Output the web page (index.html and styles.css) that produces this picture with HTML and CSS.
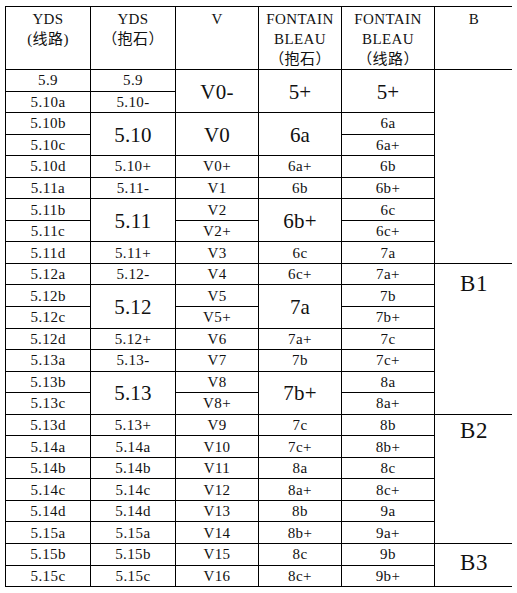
FILE: index.html
```html
<!DOCTYPE html>
<html lang="zh">
<head>
<meta charset="utf-8">
<title>攀岩难度对照表</title>
<link rel="stylesheet" href="styles.css">
</head>
<body>
<table class="grades">
  <colgroup>
    <col class="c1"><col class="c2"><col class="c3"><col class="c4"><col class="c5"><col class="c6">
  </colgroup>
  <thead>
    <tr class="head">
      <th>YDS<br>(线路)</th>
      <th>YDS<br>（抱石）</th>
      <th>V</th>
      <th>FONTAIN<br>BLEAU<br>（抱石）</th>
      <th>FONTAIN<br>BLEAU<br>（线路）</th>
      <th>B</th>
    </tr>
  </thead>
  <tbody>
    <tr><td>5.9</td><td>5.9</td><td class="big" rowspan="2">V0-</td><td class="big" rowspan="2">5+</td><td class="big" rowspan="2">5+</td><td class="band" rowspan="9"></td></tr>
    <tr><td>5.10a</td><td>5.10-</td></tr>
    <tr><td>5.10b</td><td class="big" rowspan="2">5.10</td><td class="big" rowspan="2">V0</td><td class="big" rowspan="2">6a</td><td>6a</td></tr>
    <tr><td>5.10c</td><td>6a+</td></tr>
    <tr><td>5.10d</td><td>5.10+</td><td>V0+</td><td>6a+</td><td>6b</td></tr>
    <tr><td>5.11a</td><td>5.11-</td><td>V1</td><td>6b</td><td>6b+</td></tr>
    <tr><td>5.11b</td><td class="big" rowspan="2">5.11</td><td>V2</td><td class="big" rowspan="2">6b+</td><td>6c</td></tr>
    <tr><td>5.11c</td><td>V2+</td><td>6c+</td></tr>
    <tr><td>5.11d</td><td>5.11+</td><td>V3</td><td>6c</td><td>7a</td></tr>
    <tr><td>5.12a</td><td>5.12-</td><td>V4</td><td>6c+</td><td>7a+</td><td class="band top" rowspan="7">B1</td></tr>
    <tr><td>5.12b</td><td class="big" rowspan="2">5.12</td><td>V5</td><td class="big" rowspan="2">7a</td><td>7b</td></tr>
    <tr><td>5.12c</td><td>V5+</td><td>7b+</td></tr>
    <tr><td>5.12d</td><td>5.12+</td><td>V6</td><td>7a+</td><td>7c</td></tr>
    <tr><td>5.13a</td><td>5.13-</td><td>V7</td><td>7b</td><td>7c+</td></tr>
    <tr><td>5.13b</td><td class="big" rowspan="2">5.13</td><td>V8</td><td class="big" rowspan="2">7b+</td><td>8a</td></tr>
    <tr><td>5.13c</td><td>V8+</td><td>8a+</td></tr>
    <tr><td>5.13d</td><td>5.13+</td><td>V9</td><td>7c</td><td>8b</td><td class="band top near" rowspan="6">B2</td></tr>
    <tr><td>5.14a</td><td>5.14a</td><td>V10</td><td>7c+</td><td>8b+</td></tr>
    <tr><td>5.14b</td><td>5.14b</td><td>V11</td><td>8a</td><td>8c</td></tr>
    <tr><td>5.14c</td><td>5.14c</td><td>V12</td><td>8a+</td><td>8c+</td></tr>
    <tr><td>5.14d</td><td>5.14d</td><td>V13</td><td>8b</td><td>9a</td></tr>
    <tr><td>5.15a</td><td>5.15a</td><td>V14</td><td>8b+</td><td>9a+</td></tr>
    <tr><td>5.15b</td><td>5.15b</td><td>V15</td><td>8c</td><td>9b</td><td class="band low" rowspan="2">B3</td></tr>
    <tr><td>5.15c</td><td>5.15c</td><td>V16</td><td>8c+</td><td>9b+</td></tr>
  </tbody>
</table>
</body>
</html>
```
FILE: styles.css
```css
html, body {
  background: #ffffff;
}
body {
  margin: 6px 5px;
  font-family: "Liberation Serif", "Times New Roman", "Noto Sans CJK SC", serif;
  color: #111111;
}
.grades {
  border-collapse: collapse;
  table-layout: fixed;
  width: 508px;
}
.c1 { width: 85px; }
.c2 { width: 85px; }
.c3 { width: 83px; }
.c4 { width: 83px; }
.c5 { width: 93px; }
.c6 { width: 79px; }

.grades th,
.grades td {
  border: 1px solid #000000;
  padding: 0;
  text-align: center;
}
.grades th {
  font-weight: normal;
  font-size: 15px;
  line-height: 20px;
  vertical-align: top;
  padding-top: 2px;
  letter-spacing: 0.4px;
}
.head {
  height: 63px;
}
.grades tbody tr {
  height: 21.56px;
}
.grades td {
  font-size: 15px;
  line-height: 17px;
  letter-spacing: 0.4px;
  vertical-align: middle;
  padding-top: 1px;
}
.grades td.big {
  font-size: 21px;
  line-height: 24px;
  letter-spacing: 0.2px;
}
.grades td.band {
  font-size: 23px;
  line-height: 26px;
  letter-spacing: 0.5px;
}
.grades td.top {
  vertical-align: top;
  padding-top: 7px;
}
.grades td.near {
  padding-top: 3px;
}
.grades td.low {
  padding-top: 0;
  padding-bottom: 4px;
}
```
